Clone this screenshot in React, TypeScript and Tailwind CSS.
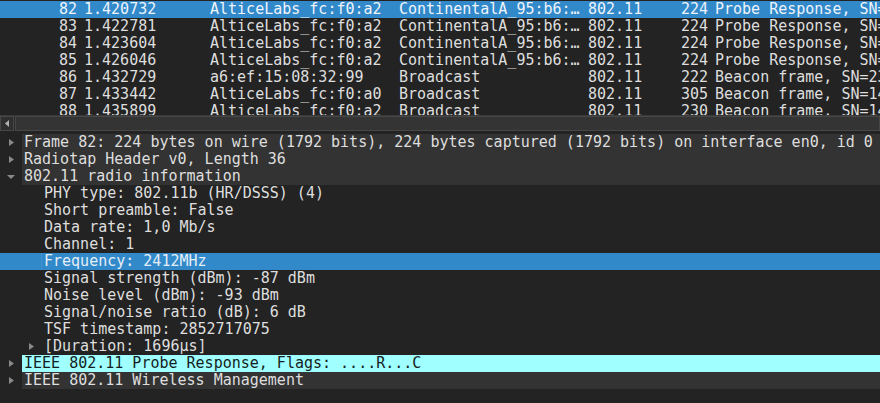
import React from 'react';

interface Packet {
  no: number;
  time: string;
  src: string;
  dst: string;
  proto: string;
  len: number;
  info: string;
}

const packets: Packet[] = [
  { no: 82, time: '1.420732', src: 'AlticeLabs_fc:f0:a2', dst: 'ContinentalA_95:b6:…', proto: '802.11', len: 224, info: 'Probe Response, SN=1618, FN=0, Flags=....R...C, BI=100' },
  { no: 83, time: '1.422781', src: 'AlticeLabs_fc:f0:a2', dst: 'ContinentalA_95:b6:…', proto: '802.11', len: 224, info: 'Probe Response, SN=1618, FN=0, Flags=....R...C, BI=100' },
  { no: 84, time: '1.423604', src: 'AlticeLabs_fc:f0:a2', dst: 'ContinentalA_95:b6:…', proto: '802.11', len: 224, info: 'Probe Response, SN=1618, FN=0, Flags=....R...C, BI=100' },
  { no: 85, time: '1.426046', src: 'AlticeLabs_fc:f0:a2', dst: 'ContinentalA_95:b6:…', proto: '802.11', len: 224, info: 'Probe Response, SN=1618, FN=0, Flags=....R...C, BI=100' },
  { no: 86, time: '1.432729', src: 'a6:ef:15:08:32:99', dst: 'Broadcast', proto: '802.11', len: 222, info: 'Beacon frame, SN=2371, FN=0, Flags=........C, BI=100' },
  { no: 87, time: '1.433442', src: 'AlticeLabs_fc:f0:a0', dst: 'Broadcast', proto: '802.11', len: 305, info: 'Beacon frame, SN=1402, FN=0, Flags=........C, BI=100' },
  { no: 88, time: '1.435899', src: 'AlticeLabs_fc:f0:a2', dst: 'Broadcast', proto: '802.11', len: 230, info: 'Beacon frame, SN=1403, FN=0, Flags=........C, BI=100' },
];

const Collapsed = () => (
  <svg width="5" height="7" viewBox="0 0 5 7" className="block">
    <path d="M0 0 L5 3.5 L0 7 Z" fill="#8a8a8a" />
  </svg>
);

const Expanded = () => (
  <svg width="8" height="4" viewBox="0 0 8 4" className="block">
    <path d="M0 0 L8 0 L4 4 Z" fill="#8a8a8a" />
  </svg>
);

type Node = {
  text: string;
  level: 0 | 1;
  arrow?: 'right' | 'down';
  tone?: 'top' | 'sel' | 'probe';
};

const tree: Node[] = [
  { text: 'Frame 82: 224 bytes on wire (1792 bits), 224 bytes captured (1792 bits) on interface en0, id 0', level: 0, arrow: 'right', tone: 'top' },
  { text: 'Radiotap Header v0, Length 36', level: 0, arrow: 'right', tone: 'top' },
  { text: '802.11 radio information', level: 0, arrow: 'down', tone: 'top' },
  { text: 'PHY type: 802.11b (HR/DSSS) (4)', level: 1 },
  { text: 'Short preamble: False', level: 1 },
  { text: 'Data rate: 1,0 Mb/s', level: 1 },
  { text: 'Channel: 1', level: 1 },
  { text: 'Frequency: 2412MHz', level: 1, tone: 'sel' },
  { text: 'Signal strength (dBm): -87 dBm', level: 1 },
  { text: 'Noise level (dBm): -93 dBm', level: 1 },
  { text: 'Signal/noise ratio (dB): 6 dB', level: 1 },
  { text: 'TSF timestamp: 2852717075', level: 1 },
  { text: '[Duration: 1696µs]', level: 1, arrow: 'right' },
  { text: 'IEEE 802.11 Probe Response, Flags: ....R...C', level: 0, arrow: 'right', tone: 'probe' },
  { text: 'IEEE 802.11 Wireless Management', level: 0, arrow: 'right', tone: 'top' },
];

const TreeRow: React.FC<{ node: Node }> = ({ node }) => {
  const sel = node.tone === 'sel';
  const contentBg =
    node.tone === 'top' ? 'bg-[#333333]' : node.tone === 'probe' ? 'bg-[#a0ffff] text-[#141e22]' : '';
  return (
    <div className={`flex h-[17px] ${sel ? 'bg-[#3189ca] text-[#e4eef6]' : ''}`}>
      {node.level === 0 ? (
        <>
          <div className="w-[22px] shrink-0 flex items-center pl-[9px]">
            {node.arrow === 'down' ? (
              <div className="-ml-[2px]">
                <Expanded />
              </div>
            ) : (
              <Collapsed />
            )}
          </div>
          <div className={`flex-1 pl-[2px] ${contentBg}`}>{node.text}</div>
        </>
      ) : (
        <>
          <div className="w-[42px] shrink-0 flex items-center pl-[29px]">
            {node.arrow === 'right' && <Collapsed />}
          </div>
          <div className={`flex-1 pl-[2px] ${sel ? 'border-l border-[#3d93d2] -ml-px' : ''}`}>{node.text}</div>
        </>
      )}
    </div>
  );
};

export default function App() {
  return (
    <div className="w-[880px] h-[403px] overflow-hidden bg-[#232323] text-[#dedede] font-['DejaVu_Sans_Mono',monospace] text-[15px] leading-[17px] whitespace-pre">
      {/* Packet list */}
      <div className="h-[115px] overflow-hidden pt-px">
        {packets.map((p, i) => (
          <div key={p.no} className={`flex h-[17px] ${i === 0 ? 'bg-[#3189ca] text-[#eef4fa]' : ''}`}>
            <div className="w-[78px] shrink-0 text-right pr-px">{p.no}</div>
            <div className="w-[132px] shrink-0 pl-[6px]">{p.time}</div>
            <div className="w-[189px] shrink-0">{p.src}</div>
            <div className="w-[189px] shrink-0">{p.dst}</div>
            <div className="w-[90px] shrink-0">{p.proto}</div>
            <div className="w-[30px] shrink-0 text-right">{p.len}</div>
            <div className="flex-1 pl-[7px]">{p.info}</div>
          </div>
        ))}
      </div>

      {/* Horizontal scrollbar */}
      <div className="h-[16px] flex bg-[#2b2b2b] border-t border-[#3a3a3a]">
        <div className="w-[14px] shrink-0 flex items-center justify-center border border-[#474747] bg-[#2f2f2f]">
          <svg width="4" height="7" viewBox="0 0 4 7">
            <path d="M4 0 L0 3.5 L4 7 Z" fill="#b0b0b0" />
          </svg>
        </div>
        <div className="flex-1 ml-px border border-[#474747] bg-[#343434]" />
      </div>

      {/* Splitter */}
      <div className="h-[3px]" />

      {/* Packet details */}
      <div>
        {tree.map((n, i) => (
          <TreeRow key={i} node={n} />
        ))}
      </div>
    </div>
  );
}
